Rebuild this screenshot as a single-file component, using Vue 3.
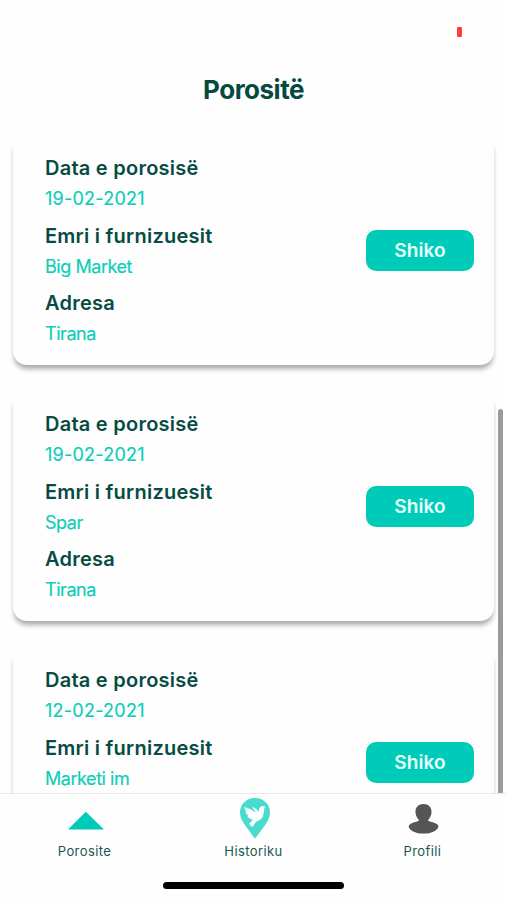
<script setup>
import { ref } from 'vue'

const orders = ref([
  { id: 1, date: '19-02-2021', supplier: 'Big Market', address: 'Tirana' },
  { id: 2, date: '19-02-2021', supplier: 'Spar', address: 'Tirana' },
  { id: 3, date: '12-02-2021', supplier: 'Marketi im' },
])

const activeTab = ref('orders')
</script>

<template>
  <div class="screen">
    <!-- status bar -->
    <div class="status-bar">
      <span class="battery"></span>
    </div>

    <header class="header">
      <h1 class="title">Porositë</h1>
    </header>

    <!-- orders -->
    <main class="list">
      <div v-for="order in orders" :key="order.id" class="card">
        <div class="fields">
          <div class="field">
            <div class="label">Data e porosisë</div>
            <div class="value date">{{ order.date }}</div>
          </div>
          <div class="field">
            <div class="label">Emri i furnizuesit</div>
            <div class="value">{{ order.supplier }}</div>
          </div>
          <div class="field">
            <template v-if="order.address">
              <div class="label">Adresa</div>
              <div class="value">{{ order.address }}</div>
            </template>
          </div>
        </div>
        <button class="view-btn">Shiko</button>
      </div>
      <div class="scrollbar"></div>
    </main>

    <!-- tabs -->
    <nav class="tabs">
      <div class="tab" @click="activeTab = 'orders'">
        <svg class="icon" width="40" height="42" viewBox="0 0 40 42">
          <path d="M20.8 17.8 39 35.6H3Z" fill="#00cbb9" />
        </svg>
        <span class="tab-label">Porosite</span>
      </div>
      <div class="tab" @click="activeTab = 'history'">
        <svg class="icon" width="40" height="42" viewBox="0 0 40 42">
          <path d="M21 4.1C12.4 4.1 6 10.3 6 18.6c0 5 2.4 8.7 5.1 12.7L21 44.8l9.9-13.5C33.600 27.300 36 23.600 36 18.600 36 10.300 29.600 4.100 21 4.100Z" fill="#47dccd" />
          <path d="M10.300 13.100C13 14.200 16 14.900 18.600 16.400L21.500 18.800C21.400 17 19 14.800 18.300 12.700C21 13.800 23.700 15.500 24.600 18C25 14.200 26.300 12 28.500 12C29.800 12 30.200 12.600 31.400 12.800C30.400 13.500 30.400 14.500 30.100 16.300C29.500 21 29.100 25 24.700 26.400C22.800 27.200 21.600 28 20.500 29.900L18.300 33L17.300 31.700L16 31.900L16.600 30.400L14.700 30.100L17.400 27.400C18.700 26.200 19.200 25.600 17.800 25.400C15.200 25 14 23.600 13.300 21.800L14.700 21.600C12.700 20.500 11.800 19 11.400 17.300L12.700 17.300C11.400 16.200 10.500 15 10.300 13.100Z" fill="#fff" />
        </svg>
        <span class="tab-label">Historiku</span>
      </div>
      <div class="tab" @click="activeTab = 'profile'">
        <svg class="icon" width="40" height="42" viewBox="0 0 40 42">
          <path d="M20.500 10C15.400 10 12.300 13.400 12.500 18C12.600 21.500 14 24 16 26C16 27.400 14 27.500 12 28.100C8 29.200 5.700 30.800 5.700 32.700C6.700 36.700 13.100 39.600 20.500 39.600S34.300 36.700 35.500 32.700C35.500 30.800 33 29.200 29 28.100C27 27.500 25 27.400 25 26C27 24 28.400 21.500 28.500 18C28.700 13.400 25.600 10 20.500 10Z" fill="#555" />
        </svg>
        <span class="tab-label">Profili</span>
      </div>
    </nav>

    <div class="home-area">
      <div class="home-indicator"></div>
    </div>
  </div>
</template>

<style>
body { background: #fefefe; }
</style>

<style scoped>
.screen {
  display: flex;
  flex-direction: column;
  height: 900px;
  overflow: hidden;
  background: #fefefe;
  font-family: Inter, "Liberation Sans", sans-serif;
}

.status-bar {
  display: flex;
  justify-content: flex-end;
  height: 33px;
  padding: 27px 45px 0 0;
}

.battery {
  width: 5px;
  height: 10px;
  border-radius: 1px;
  background: #fc4038;
}

.header {
  display: flex;
  justify-content: center;
  height: 61px;
}

.title {
  margin: 14px 0 0;
  font-size: 26px;
  line-height: 32px;
  font-weight: 700;
  letter-spacing: -0.5px;
  color: #05493f;
}

.list {
  position: relative;
  display: flex;
  flex: none;
  flex-direction: column;
  gap: 27px;
  height: 672px;
  padding: 15px 13px 0;
  box-sizing: border-box;
  overflow: hidden;
}

.card {
  display: flex;
  align-items: center;
  justify-content: space-between;
  flex: none;
  height: 229px;
  padding: 0 20px 0 32px;
  box-sizing: border-box;
  border-radius: 14px;
  background: #fefefe;
  box-shadow: 0 5px 5px -1px rgba(0, 0, 0, 0.33);
}

.fields { display: flex; flex-direction: column; gap: 7.5px; }

.field { height: 60px; }

.label {
  font-size: 20px;
  line-height: 30px;
  font-weight: 600;
  letter-spacing: 0.25px;
  color: #064c42;
}

.value {
  padding-top: 1px;
  font-size: 18px;
  line-height: 29px;
  letter-spacing: -0.45px;
  color: #10cdb9;
  -webkit-text-stroke: 0.2px #10cdb9;
}

.value.date { letter-spacing: 0.25px; }

.view-btn {
  width: 108px;
  height: 41px;
  padding: 0;
  border: none;
  border-radius: 10px;
  background: #00cbb9;
  color: #e4fffb;
  font-family: inherit;
  font-size: 19px;
  font-weight: 600;
  letter-spacing: 0.1px;
}

.scrollbar {
  position: absolute;
  top: 288px;
  right: 4px;
  bottom: -10px;
  width: 5px;
  border-radius: 3px;
  background: #9b9b9b;
}

.tabs {
  display: flex;
  flex: none;
  height: 75px;
  border-top: 1px solid #e9e9e9;
}

.tab {
  display: flex;
  flex: 1;
  flex-direction: column;
  align-items: center;
}

.icon { overflow: visible; }

.tab-label {
  margin-top: 5px;
  font-size: 13px;
  line-height: 20px;
  letter-spacing: 0.4px;
  color: #17594d;
}

.home-area {
  display: flex;
  justify-content: center;
  padding-top: 13px;
}

.home-indicator {
  width: 181px;
  height: 7px;
  border-radius: 4px;
  background: #000;
}
</style>
